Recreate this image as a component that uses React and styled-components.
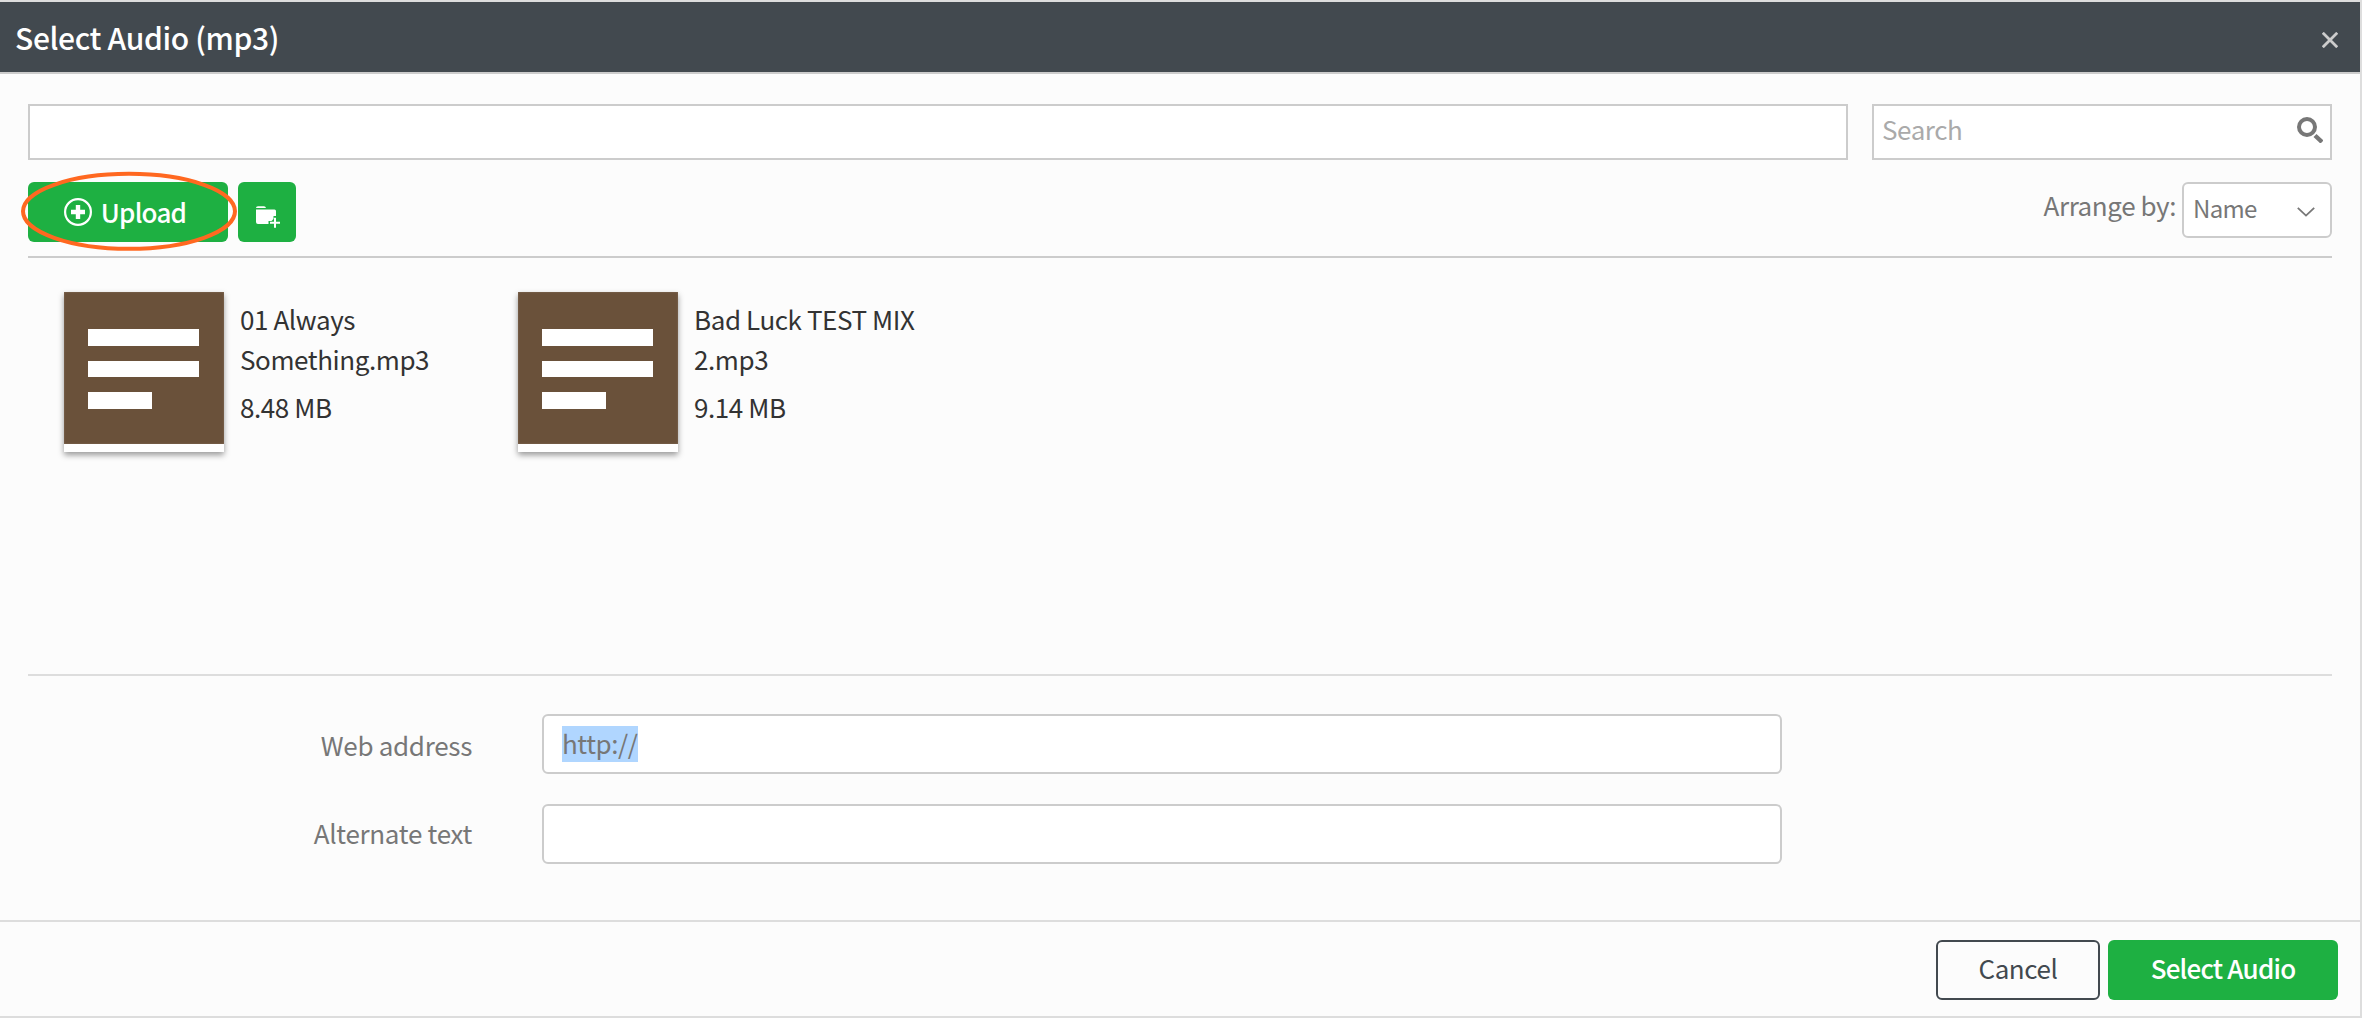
import React from 'react';
import styled, { createGlobalStyle } from 'styled-components';

const GlobalStyle = createGlobalStyle`
  *, *::before, *::after {
    box-sizing: border-box;
  }

  body {
    margin: 0;
    background: #fcfcfc;
    font-family: 'Noto Sans CJK JP', 'Noto Sans CJK SC', sans-serif;
    font-size: 26px;
    letter-spacing: -0.42px;
    color: #333;
  }

  input, button {
    font: inherit;
    letter-spacing: inherit;
  }
`;

// Dialog frame
const Dialog = styled.div`
  display: flex;
  flex-direction: column;
  width: 2362px;
  height: 1018px;
  border: 2px solid #ddd;
  border-left: 0;
  background: #fcfcfc;
  overflow: hidden;
`;

const Header = styled.header`
  display: flex;
  align-items: center;
  justify-content: space-between;
  flex: none;
  height: 72px;
  padding: 0 22px 0 15px;
  border-bottom: 2px solid #ccc;
  background: #42494f;
`;

const Title = styled.h1`
  margin: 0;
  font-size: 30px;
  font-weight: 500;
  letter-spacing: -0.35px;
  line-height: 70px;
  color: #fff;
`;

const CloseButton = styled.button`
  display: flex;
  padding: 0;
  margin-top: 6px;
  border: 0;
  background: none;
  color: #ccc;
`;

const Body = styled.main`
  display: flex;
  flex-direction: column;
  flex: none;
  height: 846px;
  padding: 30px 28px 0;
`;

const PathRow = styled.div`
  display: grid;
  grid-template-columns: 1820px 460px;
  gap: 24px;
`;

const PathBox = styled.div`
  height: 56px;
  border: 2px solid #ccc;
  background: #fff;
`;

const SearchBox = styled(PathBox)`
  display: flex;
  align-items: center;
  justify-content: space-between;
  padding: 0 7px 8px 8px;
  color: #aaa;

  svg {
    margin-top: 4px;
  }
`;

// Toolbar
const Toolbar = styled.div`
  display: flex;
  align-items: flex-start;
  gap: 10px;
  height: 98px;
  padding-top: 22px;
  border-bottom: 2px solid #ccc;
`;

const Button = styled.button`
  display: flex;
  align-items: center;
  justify-content: center;
  flex: none;
  width: ${({ $width }) => $width};
  height: 60px;
  padding: 0 0 5px;
  border: ${({ $outline }) => ($outline ? '2px solid #42494f' : '0')};
  border-radius: 6px;
  background: ${({ $outline }) => ($outline ? '#fcfcfc' : '#1eb042')};
  color: ${({ $outline }) => ($outline ? '#42494f' : '#fff')};
  font-weight: ${({ $outline }) => ($outline ? 400 : 500)};
  letter-spacing: ${({ $outline }) => ($outline ? '-0.4px' : '-0.8px')};
  line-height: 36px;
`;

const UploadButton = styled(Button)`
  padding: 0 6px 0 0;
`;

const FolderButton = styled(Button)`
  padding: 10px 0 0 2px;
`;

const UploadWrap = styled.div`
  position: relative;

  svg {
    flex: none;
  }
`;

const UploadLabel = styled.span`
  margin-left: 9px;
`;

// Hand-drawn style highlight lying over the upload button
const Callout = styled.svg`
  position: absolute;
  top: -11px;
  left: -8px;
  pointer-events: none;
`;

const Arrange = styled.label`
  display: flex;
  margin-left: auto;
  color: #777;
`;

const ArrangeLabel = styled.span`
  margin-right: 6px;
  line-height: 46px;
`;

const Select = styled.div`
  display: flex;
  align-items: center;
  justify-content: space-between;
  width: 150px;
  height: 56px;
  padding: 0 15px 6px 9px;
  border: 2px solid #ccc;
  border-radius: 6px;
  background: #fff;
  font-size: 24px;
  letter-spacing: -0.7px;

  svg {
    margin-top: 9px;
  }
`;

// File list
const FileList = styled.ul`
  display: flex;
  gap: 24px;
  height: 418px;
  margin: 0;
  padding: 34px 36px 0;
  border-bottom: 2px solid #ddd;
  list-style: none;
`;

const FileItem = styled.li`
  display: flex;
  gap: 16px;
  width: 430px;
`;

const Thumb = styled.div`
  flex: none;
  width: 160px;
  height: 160px;
  background: #fff;
  box-shadow: 0 3px 6px rgba(0, 0, 0, 0.4);
`;

const ThumbFace = styled.div`
  display: flex;
  flex-direction: column;
  gap: 14.8px;
  height: 152px;
  padding: 37.4px 24px 0;
  background: #6a513a;
  box-shadow: inset 0 0 2px #8b7663;
`;

const ThumbLine = styled.div`
  width: ${({ $width }) => $width};
  height: 16.6px;
  background: #fff;
`;

const FileInfo = styled.div`
  padding-top: 7px;
  line-height: 40px;
`;

const FileSize = styled.div`
  margin-top: 8px;
`;

// Form
const Form = styled.div`
  display: grid;
  grid-template-columns: 444px 1240px;
  row-gap: 30px;
  column-gap: 70px;
  padding-top: 38px;
`;

const FieldLabel = styled.label`
  height: 60px;
  letter-spacing: -0.3px;
  line-height: ${({ $lineHeight }) => $lineHeight};
  text-align: right;
  color: #777;
`;

const Field = styled.div`
  display: flex;
  align-items: center;
  height: 60px;
  padding: 0 18px;
  border: 2px solid #ccc;
  border-radius: 6px;
  background: #fff;
`;

const Selected = styled.span`
  height: 36px;
  background: #b0d6ff;
  line-height: 34px;
  color: #777;
`;

const Footer = styled.footer`
  display: flex;
  justify-content: flex-end;
  gap: 8px;
  height: 96px;
  padding: 18px 22px 0;
  border-top: 2px solid #ddd;
`;

const files = [
  { name: '01 Always Something.mp3', size: '8.48 MB' },
  { name: 'Bad Luck TEST MIX 2.mp3', size: '9.14 MB' },
];

const CloseIcon = () => (
  <svg width="16" height="16" viewBox="0 0 16 16">
    <path d="M0.8 0.8L15.2 15.2M15.2 0.8L0.8 15.2" stroke="currentColor" strokeWidth="2.8" />
  </svg>
);

const SearchIcon = () => (
  <svg width="26" height="26" viewBox="0 0 26 26" fill="none" stroke="#777">
    <circle cx="10" cy="10" r="8" strokeWidth="4" />
    <path d="M18 18.5L25 25" strokeWidth="4.4" />
  </svg>
);

const PlusCircleIcon = () => (
  <svg width="28" height="28" viewBox="0 0 28 28" fill="none" stroke="#fff">
    <circle cx="14" cy="14" r="12.9" strokeWidth="2.2" />
    <path d="M14 7V21M7 14H21" strokeWidth="4.4" />
  </svg>
);

const FolderPlusIcon = () => (
  <svg width="24" height="22" viewBox="0 0 24 22">
    <path d="M0 2Q0 0.2 2 0.2H8Q9.6 0.2 10 2Z" fill="#fff" />
    <path d="M0 3.6H18.5Q20 3.6 20 5.1V10H17.5V13L15.5 15H12.5V18H2Q0 18 0 16Z" fill="#fff" />
    <path d="M19 11.7V21.7M14 16.7H24" stroke="#fff" strokeWidth="2" />
  </svg>
);

const ChevronIcon = () => (
  <svg width="18" height="10" viewBox="0 0 18 10" fill="none">
    <path d="M0.8 0.8L9 8.6L17.2 0.8" stroke="#777" strokeWidth="1.8" />
  </svg>
);

const App = () => (
  <>
    <GlobalStyle />
    <Dialog>
      <Header>
        <Title>Select Audio (mp3)</Title>
        <CloseButton aria-label="Close">
          <CloseIcon />
        </CloseButton>
      </Header>
      <Body>
        <PathRow>
          <PathBox />
          <SearchBox>
            <span>Search</span>
            <SearchIcon />
          </SearchBox>
        </PathRow>
        <Toolbar>
          <UploadWrap>
            <UploadButton $width="200px">
              <PlusCircleIcon />
              <UploadLabel>Upload</UploadLabel>
            </UploadButton>
            <Callout width="218" height="80" viewBox="0 0 218 80">
              <ellipse cx="109" cy="40.3" rx="106" ry="37.5" fill="none" stroke="#ff6820" strokeWidth="4" />
            </Callout>
          </UploadWrap>
          <FolderButton $width="58px" aria-label="New folder">
            <FolderPlusIcon />
          </FolderButton>
          <Arrange>
            <ArrangeLabel>Arrange by:</ArrangeLabel>
            <Select>
              <span>Name</span>
              <ChevronIcon />
            </Select>
          </Arrange>
        </Toolbar>
        <FileList>
          {files.map((file) => (
            <FileItem key={file.name}>
              <Thumb>
                <ThumbFace>
                  <ThumbLine $width="111px" />
                  <ThumbLine $width="111px" />
                  <ThumbLine $width="64px" />
                </ThumbFace>
              </Thumb>
              <FileInfo>
                <div>{file.name}</div>
                <FileSize>{file.size}</FileSize>
              </FileInfo>
            </FileItem>
          ))}
        </FileList>
        <Form>
          <FieldLabel $lineHeight="62px">Web address</FieldLabel>
          <Field>
            <Selected>http://</Selected>
          </Field>
          <FieldLabel $lineHeight="58px">Alternate text</FieldLabel>
          <Field />
        </Form>
      </Body>
      <Footer>
        <Button $outline $width="164px">Cancel</Button>
        <Button $width="230px">Select Audio</Button>
      </Footer>
    </Dialog>
  </>
);

export default App;
